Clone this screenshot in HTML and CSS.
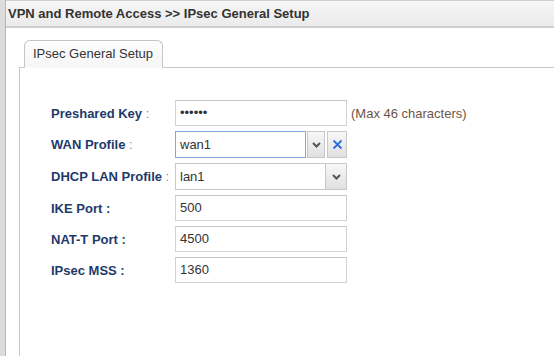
FILE: index.html
```html
<!DOCTYPE html>
<html lang="en">
<head>
    <meta charset="UTF-8">
    <title>IPsec General Setup</title>
    <link rel="stylesheet" href="styles.css">
</head>
<body>
    <div class="window">
        <div class="titlebar">VPN and Remote Access &gt;&gt; IPsec General Setup</div>
        <div class="content">
            <div class="tabs">
                <div class="tab">IPsec General Setup</div>
            </div>
            <div class="panel">
                <div class="form">
                    <label class="label">Preshared Key <span class="colon">:</span></label>
                    <div class="field">
                        <div class="input">&bull;&bull;&bull;&bull;&bull;&bull;</div>
                        <span class="hint">(Max 46 characters)</span>
                    </div>

                    <label class="label">WAN Profile <span class="colon">:</span></label>
                    <div class="field">
                        <div class="input combo focused">wan1</div>
                        <div class="btn">
                            <svg width="9" height="6" viewBox="0 0 9 6"><path d="M1 1 L4.5 4.5 L8 1" fill="none" stroke="#555" stroke-width="2"/></svg>
                        </div>
                        <div class="btn clear">
                            <svg width="11" height="11" viewBox="0 0 11 11"><path d="M1.5 1.5 L9.5 9.5 M9.5 1.5 L1.5 9.5" stroke="#2f6fdc" stroke-width="1.8"/></svg>
                        </div>
                    </div>

                    <label class="label">DHCP LAN Profile <span class="colon">:</span></label>
                    <div class="field">
                        <div class="select">
                            <span class="value">lan1</span>
                            <div class="btn inner">
                                <svg width="9" height="6" viewBox="0 0 9 6"><path d="M1 1 L4.5 4.5 L8 1" fill="none" stroke="#555" stroke-width="2"/></svg>
                            </div>
                        </div>
                    </div>

                    <label class="label">IKE Port :</label>
                    <div class="field"><div class="input">500</div></div>

                    <label class="label">NAT-T Port :</label>
                    <div class="field"><div class="input">4500</div></div>

                    <label class="label">IPsec MSS :</label>
                    <div class="field"><div class="input">1360</div></div>
                </div>
            </div>
        </div>
    </div>
</body>
</html>
```

FILE: styles.css
```css
html, body {
    height: 100%;
}

body {
    margin: 0;
    font-family: 'Liberation Sans', Arial, sans-serif;
    font-size: 13px;
    color: #333;
    background: #dcdcdc;
    padding-left: 5px;
    overflow: hidden;
}

.window {
    height: 100%;
    background: #fff;
    border-left: 1px solid #b8b8b8;
    display: flex;
    flex-direction: column;
}

.titlebar {
    height: 25px;
    line-height: 25px;
    padding-left: 2px;
    font-weight: bold;
    color: #333;
    background: linear-gradient(to bottom, #f6f6f6, #ebebeb);
    border-top: 1px solid #d0d0d0;
    border-bottom: 2px solid #cfcfcf;
}

.content {
    flex: 1;
    display: flex;
    flex-direction: column;
    padding: 12px 0 0 13px;
}

.tabs {
    display: flex;
    padding-left: 5px;
    border-bottom: 1px solid #c8c8c8;
}

.tab {
    position: relative;
    margin-bottom: -1px;
    height: 26px;
    line-height: 26px;
    padding: 0 9px 0 8px;
    border: 1px solid #c4c4c4;
    border-bottom: 1px solid #fafafa;
    border-radius: 6px 6px 0 0;
    background: linear-gradient(to bottom, #fdfdfd, #f6f6f6);
    color: #333;
}

.panel {
    flex: 1;
    border-left: 1px solid #c8c8c8;
    padding: 32px 0 0 31px;
}

.form {
    display: grid;
    grid-template-columns: 124px auto;
    row-gap: 5px;
    align-items: center;
}

.label {
    font-weight: bold;
    color: #1e3a6b;
}

.colon {
    font-weight: normal;
    color: #8a8a8a;
}

.field {
    display: flex;
    align-items: center;
}

.input {
    box-sizing: border-box;
    width: 172px;
    height: 26px;
    line-height: 24px;
    padding-left: 4px;
    border: 1px solid #d2d2d2;
    border-top-color: #c4c4c4;
    color: #333;
}

.combo {
    width: 131px;
    height: 27px;
    line-height: 25px;
}

.focused {
    border: 1px solid #7fa7dc;
}

.hint {
    margin-left: 4px;
    color: #6e5548;
}

.btn {
    box-sizing: border-box;
    width: 18px;
    height: 27px;
    margin-left: 1px;
    border: 1px solid #c8c8c8;
    background: linear-gradient(to bottom, #f7f7f7, #e0e0e0);
    display: flex;
    align-items: center;
    justify-content: center;
}

.btn.clear {
    width: 20px;
    margin-left: 2px;
}

.select {
    box-sizing: border-box;
    width: 172px;
    height: 27px;
    border: 1px solid #c8c8c8;
    display: flex;
    align-items: center;
}

.select .value {
    flex: 1;
    padding-left: 4px;
}

.btn.inner {
    width: 21px;
    height: 25px;
    margin-left: 0;
    border: none;
    border-left: 1px solid #c8c8c8;
}
```
